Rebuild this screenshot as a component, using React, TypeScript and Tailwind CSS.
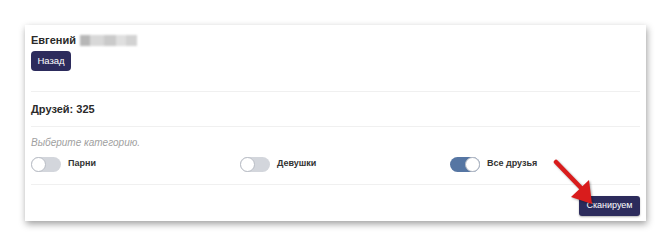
import { useState } from 'react';

type Option = { id: string; label: string };

const OPTIONS: Option[] = [
  { id: 'boys', label: 'Парни' },
  { id: 'girls', label: 'Девушки' },
  { id: 'all', label: 'Все друзья' },
];

function Toggle({ on }: { on: boolean }) {
  return (
    <div
      className={`relative w-[30px] h-[15px] rounded-full ${on ? 'bg-[#5676a3]' : 'bg-[#d3d6dc]'}`}
    >
      <div
        className={`absolute top-[0px] w-[15px] h-[15px] rounded-full bg-white border border-[#b8bcc4] ${on ? 'left-[15px]' : 'left-0'}`}
      />
    </div>
  );
}

export default function App() {
  const [selected] = useState('all');

  return (
    <div className="w-[671px] h-[248px] bg-white pt-[25px] pl-[25px] font-['Liberation_Sans',Arial,sans-serif]">
      <div className="relative w-[621px] h-[196px] bg-white shadow-[1px_3px_7px_rgba(0,0,0,0.38)] pt-[8px] pl-[6px] pr-[6px]">
        {/* Header */}
        <div className="flex items-center h-[14px] gap-[4px]">
          <span className="text-[11px] font-bold text-[#2a2a2a]">Евгений</span>
          <div className="flex h-[11px] w-[57px] blur-[0.8px] opacity-70">
            <div className="w-[10px] bg-[#9a9a9a]" />
            <div className="w-[14px] bg-[#c8c8c8]" />
            <div className="w-[12px] bg-[#b4b4b4]" />
            <div className="w-[10px] bg-[#d2d2d2]" />
            <div className="w-[11px] bg-[#c0c0c0]" />
          </div>
        </div>
        <button className="mt-[4px] h-[20px] w-[40px] rounded-[4px] bg-[#2c2b5c] text-white text-[9.5px]">
          Назад
        </button>

        <div className="mt-[20px] border-t border-[#f0f0f0]" />
        <div className="h-[34px] flex items-center text-[11px] font-bold text-[#2a2a2a]">Друзей: 325</div>
        <div className="border-t border-[#f0f0f0]" />

        <div className="mt-[9px] text-[10px] italic text-[#a0a0a0] leading-[14px]">Выберите категорию.</div>
        <div className="mt-[6px] grid grid-cols-[209px_210px_1fr] items-center h-[16px]">
          {OPTIONS.map((o) => (
            <div key={o.id} className="flex items-center gap-[7px]">
              <Toggle on={selected === o.id} />
              <span className="text-[9px] font-bold text-[#333]">{o.label}</span>
            </div>
          ))}
        </div>
        <div className="mt-[12px] border-t border-[#f0f0f0]" />

        <div className="flex justify-end mt-[11px]">
          <button className="h-[20px] w-[61px] rounded-[3px] bg-[#2c2b5c] text-white text-[9px] shadow-[0_1px_2px_rgba(0,0,0,0.3)]">
            Сканируем
          </button>
        </div>

        {/* Red pointer arrow */}
        <svg
          className="absolute left-[527px] top-[133px] drop-shadow-[1px_1px_1px_rgba(0,0,0,0.35)]"
          width="48"
          height="50"
          viewBox="0 0 48 50"
        >
          <line x1="4" y1="4" x2="32" y2="33" stroke="#d91c1c" strokeWidth="4.5" strokeLinecap="round" />
          <polygon points="40,46 19,39 37,22" fill="#d91c1c" />
        </svg>
      </div>
    </div>
  );
}
